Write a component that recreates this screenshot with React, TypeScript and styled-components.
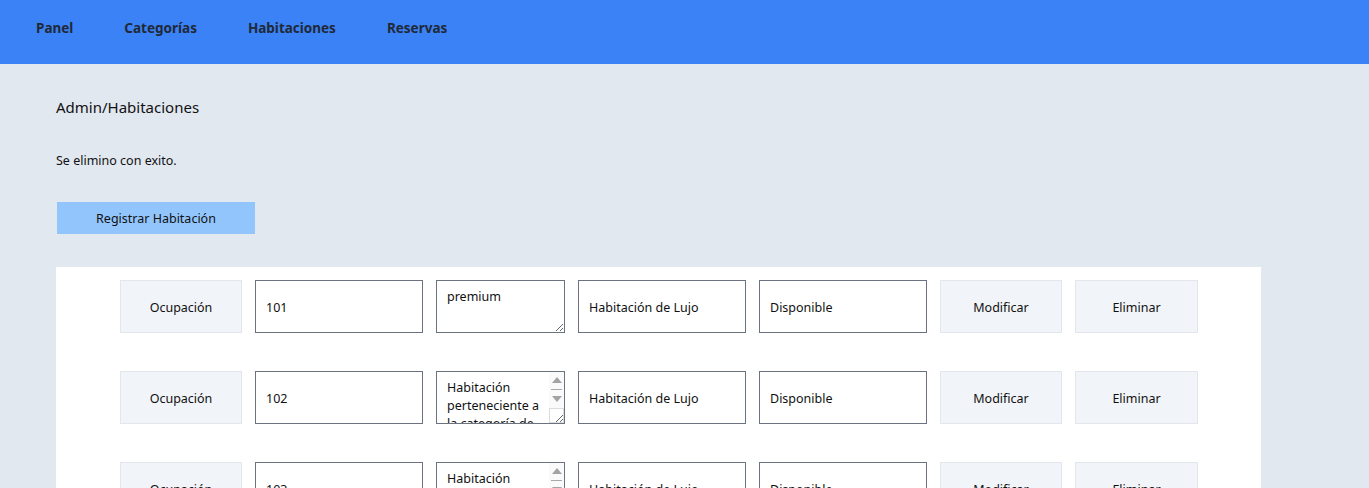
import React from "react";
import styled, { createGlobalStyle } from "styled-components";

const Global = createGlobalStyle`
  html, body { margin: 0; padding: 0; }
  body {
    background: #e2e8f0;
    font-family: "Noto Sans", "Open Sans", sans-serif;
    color: #111827;
  }
  * { box-sizing: border-box; }
`;

const Nav = styled.nav`
  height: 64px;
  background: #3b82f6;
  display: flex;
  align-items: center;
  padding: 0 0 8px 36px;
  gap: 51px;
`;

const NavLink = styled.a`
  font-weight: 700;
  font-size: 13.5px;
  color: #1f2937;
  text-decoration: none;
`;

const Main = styled.main`
  padding: 32px 56px 0 56px;
  display: flex;
  flex-direction: column;
  align-items: flex-start;
`;

const Title = styled.h1`
  font-size: 15px;
  font-weight: 400;
  margin: 0;
  line-height: 22px;
  color: #111;
`;

const Message = styled.p`
  font-size: 12.5px;
  margin: 34px 0 0 0;
  line-height: 18px;
  color: #111;
`;

const PrimaryButton = styled.button`
  margin: 32px 0 0 1px;
  width: 198px;
  height: 32px;
  border: none;
  background: #93c5fd;
  font-family: inherit;
  font-size: 12.5px;
  color: #111;
`;

const Panel = styled.section`
  margin-top: 33px;
  width: 1205px;
  background: #fff;
  padding: 13px 63px 0 64px;
  display: flex;
  flex-direction: column;
  gap: 38px;
`;

const Row = styled.div`
  display: flex;
  gap: 13px;
  height: 53px;
`;

const Cell = styled.button<{ $w: number }>`
  width: ${(p) => p.$w}px;
  height: 53px;
  background: #f1f4f8;
  border: 1px solid #e3e7ed;
  font-family: inherit;
  font-size: 12.5px;
  color: #111;
  padding: 2px 0 0;
`;

const Field = styled.input`
  width: 168px;
  height: 53px;
  border: 1px solid #6b7280;
  background: #fff;
  padding: 1px 10px 0;
  font-family: inherit;
  font-size: 12.5px;
  color: #111;
  outline: none;
`;

const AreaWrap = styled.div`
  position: relative;
  width: 129px;
  height: 53px;
`;

const Area = styled.textarea<{ $bar: boolean }>`
  display: block;
  width: 129px;
  height: 53px;
  border: 1px solid #6b7280;
  background: #fff;
  padding: 7px ${(p) => (p.$bar ? 22 : 10)}px 7px 10px;
  font-family: inherit;
  font-size: 12.5px;
  line-height: 18px;
  color: #111;
  outline: none;
  margin: 0;
  overflow: hidden;
`;

const ScrollBar = styled.div`
  position: absolute;
  top: 1px;
  right: 1px;
  bottom: 1px;
  width: 15px;
  display: flex;
  flex-direction: column;
  pointer-events: none;
`;

const Track = styled.div`
  flex: 1;
  background: #fafafa;
  display: flex;
  flex-direction: column;
  align-items: center;
`;

const ArrowUp = styled.div`
  margin-top: 5px;
  width: 0;
  height: 0;
  border-left: 5px solid transparent;
  border-right: 5px solid transparent;
  border-bottom: 6px solid #a3a3a3;
`;

const ArrowDown = styled.div`
  width: 0;
  height: 0;
  border-left: 5px solid transparent;
  border-right: 5px solid transparent;
  border-top: 6px solid #a3a3a3;
`;

const Thumb = styled.div`
  width: 11px;
  height: 1px;
  background: #a8a8a8;
  margin: 6px 0 6px;
`;

const Corner = styled.div`
  width: 15px;
  height: 15px;
  border: 1px solid #dcdcdc;
  background: transparent;
`;

const rooms = [
  { num: "101", desc: "premium", bar: false },
  { num: "102", desc: "Habitación perteneciente a la categoría de lujo", bar: true },
  { num: "103", desc: "Habitación perteneciente a la categoría de lujo", bar: true },
];

export default function App() {
  return (
    <>
      <Global />
      <Nav>
        <NavLink href="#">Panel</NavLink>
        <NavLink href="#">Categorías</NavLink>
        <NavLink href="#">Habitaciones</NavLink>
        <NavLink href="#">Reservas</NavLink>
      </Nav>
      <Main>
        <Title>Admin/Habitaciones</Title>
        <Message>Se elimino con exito.</Message>
        <PrimaryButton>Registrar Habitación</PrimaryButton>
        <Panel>
          {rooms.map((r) => (
            <Row key={r.num}>
              <Cell $w={122}>Ocupación</Cell>
              <Field readOnly value={r.num} />
              <AreaWrap>
                <Area readOnly value={r.desc} $bar={r.bar} />
                {r.bar && (
                  <ScrollBar>
                    <Track>
                      <ArrowUp />
                      <Thumb />
                      <ArrowDown />
                    </Track>
                    <Corner />
                  </ScrollBar>
                )}
              </AreaWrap>
              <Field readOnly value="Habitación de Lujo" />
              <Field readOnly value="Disponible" />
              <Cell $w={122}>Modificar</Cell>
              <Cell $w={123}>Eliminar</Cell>
            </Row>
          ))}
        </Panel>
      </Main>
    </>
  );
}
